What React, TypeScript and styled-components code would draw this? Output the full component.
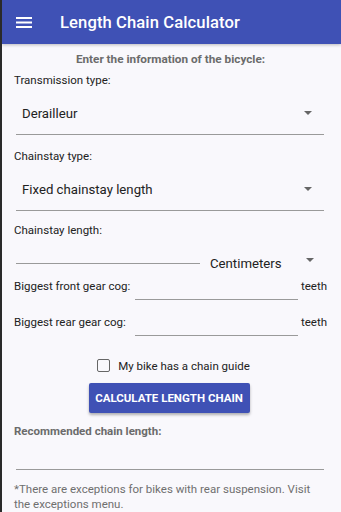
import styled, { createGlobalStyle } from 'styled-components';

const GlobalStyle = createGlobalStyle`
  html, body {
    margin: 0;
    padding: 0;
    background: #f9f8fc;
  }
  body {
    font-family: Roboto, "Noto Sans", sans-serif;
  }
`;

function Caret() {
  return (
    <svg width="8" height="4" viewBox="0 0 8 4">
      <path d="M0 0 L8 0 L4 4 Z" fill="#666" />
    </svg>
  );
}

function App() {
  return (
    <S.Page>
      <GlobalStyle />
      <S.Header>
        <S.MenuBtn>
          <svg width="16" height="11" viewBox="0 0 16 11">
            <rect x="0" y="0" width="16" height="2" fill="#fff" />
            <rect x="0" y="4.5" width="16" height="2" fill="#fff" />
            <rect x="0" y="9" width="16" height="2" fill="#fff" />
          </svg>
        </S.MenuBtn>
        <S.Title>Length Chain Calculator</S.Title>
      </S.Header>
      <S.Content>
        <S.Intro>Enter the information of the bicycle:</S.Intro>

        <S.Label>Transmission type:</S.Label>
        <S.Select>
          <span>Derailleur</span>
          <Caret />
        </S.Select>

        <S.Label $top={14}>Chainstay type:</S.Label>
        <S.Select>
          <span>Fixed chainstay length</span>
          <Caret />
        </S.Select>

        <S.Label $top={12}>Chainstay length:</S.Label>
        <S.UnitRow>
          <S.Line $width={184} />
          <S.UnitText>Centimeters</S.UnitText>
          <S.UnitCaret>
            <Caret />
          </S.UnitCaret>
        </S.UnitRow>

        <S.CogRow $top={6}>
          <S.CogLabel>Biggest front gear cog:</S.CogLabel>
          <S.CogLine />
          <S.CogUnit>teeth</S.CogUnit>
        </S.CogRow>
        <S.CogRow>
          <S.CogLabel>Biggest rear gear cog:</S.CogLabel>
          <S.CogLine />
          <S.CogUnit>teeth</S.CogUnit>
        </S.CogRow>

        <S.CheckRow>
          <S.CheckBox />
          <span>My bike has a chain guide</span>
        </S.CheckRow>
        <S.BtnRow>
          <S.CalcBtn>CALCULATE LENGTH CHAIN</S.CalcBtn>
        </S.BtnRow>

        <S.ResultLabel>Recommended chain length:</S.ResultLabel>
        <S.ResultLine />
        <S.Note>
          *There are exceptions for bikes with rear suspension. Visit the
          exceptions menu.
        </S.Note>
      </S.Content>
    </S.Page>
  );
}

export default App;

const S = {
  Page: styled.div`
    width: 341px;
    height: 512px;
    overflow: hidden;
    background: #f9f8fc;
    border-left: 2px solid #2a2a2a;
    box-sizing: border-box;
  `,
  Header: styled.header`
    height: 44px;
    background: #3f51b5;
    display: flex;
    align-items: center;
    box-shadow: 0 1px 3px rgba(0, 0, 0, 0.25);
  `,
  MenuBtn: styled.div`
    width: 58px;
    display: flex;
    padding-left: 14px;
    box-sizing: border-box;
  `,
  Title: styled.h1`
    margin: 0;
    color: #fff;
    font-size: 16.6px;
    font-weight: 500;
    letter-spacing: 0.1px;
  `,
  Content: styled.div`
    padding: 0 17px 0 12px;
    color: #222;
  `,
  Intro: styled.div`
    text-align: center;
    font-size: 11.75px;
    font-weight: 700;
    color: #6b6b6b;
    margin-top: 8px;
    line-height: 14px;
    padding-left: 3px;
  `,
  Label: styled.div<{ $top?: number }>`
    font-size: 11.5px;
    line-height: 15px;
    margin-top: ${(p) => p.$top ?? 7}px;
  `,
  Select: styled.div`
    margin: 9px 0 0 2px;
    height: 38px;
    display: flex;
    justify-content: space-between;
    align-items: center;
    padding: 0 12px 5px 6px;
    box-sizing: border-box;
    border-bottom: 1px solid #9a9a9a;
    font-size: 13.2px;
    color: #222;
  `,
  UnitRow: styled.div`
    display: flex;
    align-items: center;
    height: 18px;
    margin-top: 17px;
    padding-left: 2px;
  `,
  Line: styled.div<{ $width: number }>`
    width: ${(p) => p.$width}px;
    border-bottom: 1px solid #9a9a9a;
    margin-top: -2px;
  `,
  UnitText: styled.div`
    font-size: 13.2px;
    margin-left: 10px;
    line-height: 18px;
  `,
  UnitCaret: styled.div`
    margin-left: 24px;
    margin-top: -8px;
    display: flex;
  `,
  CogRow: styled.div<{ $top?: number }>`
    display: flex;
    align-items: flex-start;
    height: 36px;
    margin-top: ${(p) => p.$top ?? 0}px;
  `,
  CogLabel: styled.div`
    flex-shrink: 0;
    font-size: 11.5px;
    line-height: 15px;
    width: 121px;
    white-space: nowrap;
  `,
  CogLine: styled.div`
    flex-shrink: 0;
    width: 163px;
    height: 20px;
    border-bottom: 1px solid #9a9a9a;
  `,
  CogUnit: styled.div`
    flex-shrink: 0;
    font-size: 11.5px;
    line-height: 15px;
    margin-left: 3px;
  `,
  CheckRow: styled.div`
    display: flex;
    align-items: center;
    justify-content: center;
    gap: 8px;
    margin-top: 7px;
    height: 15px;
    font-size: 11.5px;
    padding-left: 9px;
  `,
  CheckBox: styled.div`
    width: 11px;
    height: 11px;
    border: 1.5px solid #666;
    border-radius: 2px;
  `,
  BtnRow: styled.div`
    display: flex;
    justify-content: center;
    margin-top: 10px;
  `,
  CalcBtn: styled.div`
    width: 161px;
    height: 30px;
    background: #3f51b5;
    color: #fff;
    font-size: 11.5px;
    font-weight: 700;
    display: flex;
    align-items: center;
    justify-content: center;
    border-radius: 2px;
    box-shadow: 0 2px 3px rgba(0, 0, 0, 0.3);
  `,
  ResultLabel: styled.div`
    font-size: 11.5px;
    line-height: 15px;
    font-weight: 700;
    color: #6b6b6b;
    margin-top: 11px;
  `,
  ResultLine: styled.div`
    margin: 30px 0 0 2px;
    border-bottom: 1px solid #9a9a9a;
  `,
  Note: styled.div`
    font-size: 11.5px;
    color: #6f6f6f;
    line-height: 15px;
    margin-top: 12px;
  `,
};
